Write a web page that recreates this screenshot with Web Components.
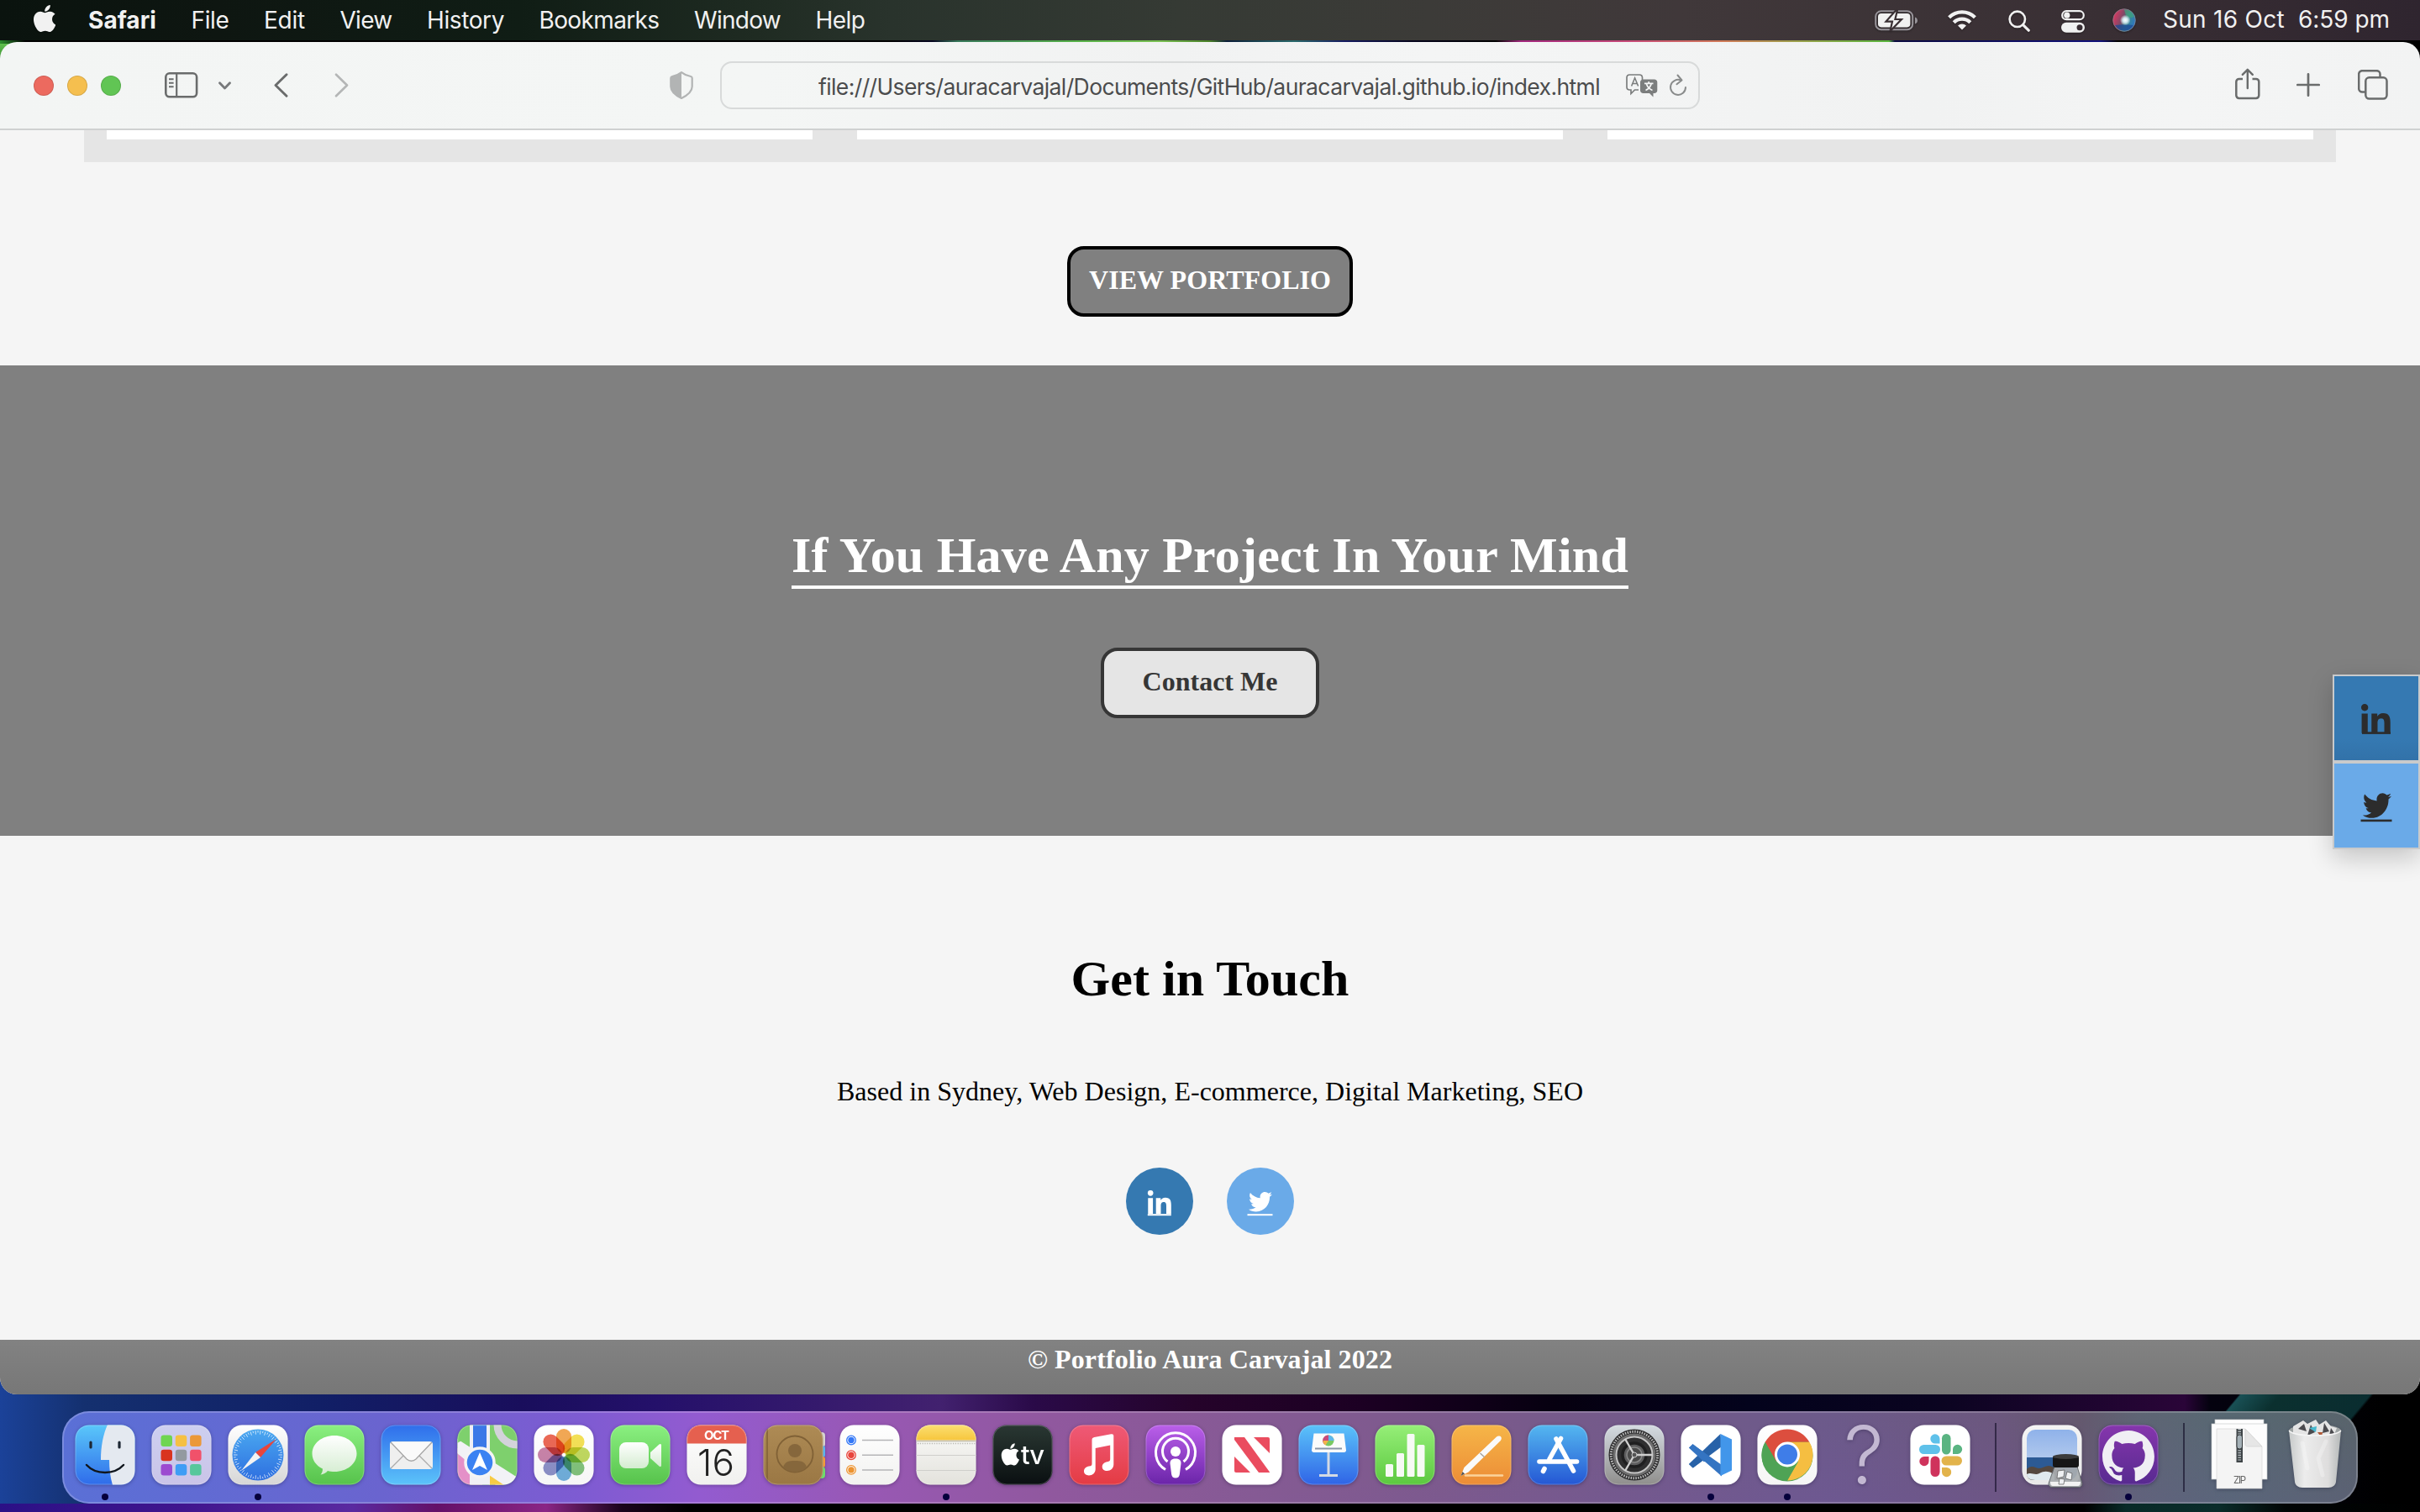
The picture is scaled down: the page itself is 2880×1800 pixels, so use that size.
<!DOCTYPE html>
<html lang="en">
<head>
<meta charset="utf-8">
<title>Portfolio</title>
<style>
html,body{margin:0;padding:0;width:2880px;height:1800px;overflow:hidden;background:#000}
</style>
</head>
<body>
<desk-top></desk-top>
<script>
const define = (name, html, init) => customElements.define(name, class extends HTMLElement {
  connectedCallback() {
    if (this.shadowRoot) return;
    const t = document.createElement('template');
    t.innerHTML = typeof html === 'function' ? html(this) : html;
    this.attachShadow({ mode: 'open' }).appendChild(t.content.cloneNode(true));
    if (init) init(this);
  }
});

/* Single line of text tracked to an exact advance width (attribute w). */
define('fit-text', `<style>:host{display:inline-block;white-space:pre}span{display:inline-block;white-space:pre}</style><span><slot></slot></span>`, el => {
  const s = el.shadowRoot.querySelector('span');
  const w = +el.getAttribute('w'), n = el.textContent.length;
  const d = (w - s.getBoundingClientRect().width) / n;
  s.style.letterSpacing = d.toFixed(3) + 'px';
  el.style.width = w + 'px';
});

const APPLE = 'M318.7 268.7c-.2-36.7 16.4-64.4 50-84.8-18.8-26.9-47.2-41.7-84.7-44.6-35.5-2.8-74.3 20.7-88.5 20.7-15 0-49.4-19.7-76.4-19.7C63.3 141.2 4 184.8 4 273.5q0 39.3 14.4 81.2c12.8 36.7 59 126.7 107.2 125.2 25.2-.6 43-17.9 75.8-17.9 31.8 0 48.3 17.9 76.4 17.9 48.6-.7 90.4-82.5 102.6-119.3-65.2-30.7-61.7-90-61.7-91.9zm-56.6-164.2c27.3-32.4 24.8-61.9 24-72.5-24.1 1.4-52 16.4-67.9 34.9-17.5 19.8-27.8 44.3-25.6 71.9 26.1 2 49.9-11.4 69.5-34.3z';
const TW = 'M459.37 151.716c.325 4.548.325 9.097.325 13.645 0 138.72-105.583 298.558-298.558 298.558-59.452 0-114.68-17.219-161.137-47.106 8.447.974 16.568 1.299 25.34 1.299 49.055 0 94.213-16.568 130.274-44.832-46.132-.975-84.792-31.188-98.112-72.772 6.498.974 12.995 1.624 19.818 1.624 9.421 0 18.843-1.3 27.614-3.573-48.081-9.747-84.143-51.98-84.143-102.985v-1.299c13.969 7.797 30.214 12.67 47.431 13.319-28.264-18.843-46.781-51.005-46.781-87.391 0-19.492 5.197-37.36 14.294-52.954 51.655 63.675 129.3 105.258 216.365 109.807-1.624-7.797-2.599-15.918-2.599-24.04 0-57.828 46.782-104.934 104.934-104.934 30.213 0 57.502 12.67 76.67 33.137 23.715-4.548 46.456-13.32 66.599-25.34-7.798 24.366-24.366 44.833-46.132 57.827 21.117-2.273 41.584-8.122 60.426-16.243-14.292 20.791-32.161 39.308-52.628 54.253z';
const LI = 'M100.28 448H7.4V148.9h92.88zM53.79 108.1C24.09 108.1 0 83.5 0 53.8a53.79 53.79 0 0 1 107.58 0c0 29.7-24.1 54.3-53.79 54.3zM447.9 448h-92.68V302.4c0-34.7-.7-79.2-48.29-79.2-48.29 0-55.69 37.7-55.69 76.7V448h-92.78V148.9h89.08v40.8h1.3c12.4-23.5 42.69-48.3 87.88-48.3 94 0 111.28 61.9 111.28 142.3V448z';

/* Monochrome interface glyphs: [width, height, markup], drawn with currentColor. */
const GLYPHS = {
  apple: [26, 32, `<g transform="translate(-.3 -2.3) scale(.0702 .0715)"><path fill="currentColor" d="${APPLE}"/></g>`],
  battery: [52, 25, `<rect x="1.2" y="1.2" width="44" height="22" rx="6.5" fill="none" stroke="#98949a" stroke-width="2"/><rect x="4" y="4" width="38.4" height="16.4" rx="3.8" fill="currentColor"/><path d="M48 8.5v8c2-.6 3-2.200 3-4s-1-3.400-3-4z" fill="#98949a"/><path d="M25.500 0L13.500 13.600h7.500L18.500 25 32 11h-7.600L27 0z" fill="currentColor" stroke="#3a3034" stroke-width="2.200"/>`],
  wifi: [34, 25, `<g fill="none" stroke="currentColor" stroke-width="4.300"><path d="M1.600 9.700a22 22 0 0 1 30.800 0"/><path d="M7.200 15.700a14 14 0 0 1 19.600 0"/></g><path fill="currentColor" d="M17 24.600l-5-5.200a7.400 7.400 0 0 1 10 0z"/>`],
  search: [26, 26, `<circle cx="10.800" cy="10.800" r="9.200" fill="none" stroke="currentColor" stroke-width="2.600"/><path d="M17.600 17.600l6.600 6.600" stroke="currentColor" stroke-width="3.200" stroke-linecap="round"/>`],
  control: [28, 27, `<rect x="1.200" y="1.200" width="25.600" height="10" rx="5" fill="none" stroke="currentColor" stroke-width="2.200"/><circle cx="6.800" cy="6.200" r="3.600" fill="currentColor"/><rect y="14.800" width="28" height="12" rx="6" fill="currentColor"/><circle cx="22" cy="20.800" r="3.500" fill="#382e33"/>`],
  siri: [28, 28, `<defs><radialGradient id="a" cx=".55" cy=".5" r=".5"><stop offset="0" stop-color="#fff"/><stop offset=".22" stop-color="#cfe8f0"/><stop offset=".5" stop-color="#fff" stop-opacity="0"/></radialGradient><linearGradient id="b" x1="0" y1=".3" x2="1" y2=".7"><stop offset="0" stop-color="#e0365f"/><stop offset=".4" stop-color="#7d4a68"/><stop offset=".6" stop-color="#3a8a8c"/><stop offset="1" stop-color="#2c74c8"/></linearGradient></defs><circle cx="14" cy="14" r="13.500" fill="url(#b)"/><path d="M14 1a13 13 0 0 1 12 9c-6 2-10 2-12-9z" fill="#3fa27e" opacity=".7"/><path d="M3 20c8-1 15-1 22 0-4 8-16 10-22 0z" fill="#1e4b96" opacity=".8"/><circle cx="14" cy="14" r="12.500" fill="url(#a)"/><circle cx="14" cy="14" r="13.300" fill="none" stroke="#8a8894" stroke-width=".7"/>`],
  sidebar: [40, 31, `<rect x="1.300" y="1.300" width="36.800" height="28" rx="4.500" fill="none" stroke="currentColor" stroke-width="2.600"/><path d="M14.200 1.300v28" stroke="currentColor" stroke-width="2.200"/><path d="M5 8.300h5.600M5 12.800h5.600M5 17.300h5.600" stroke="currentColor" stroke-width="1.900"/>`],
  chev: [15, 10, `<path d="M1.500 1.700L7.500 8l6-6.300" fill="none" stroke="currentColor" stroke-width="2.800" stroke-linecap="round" stroke-linejoin="round"/>`],
  back: [17, 29, `<path d="M15 1.700L2 14.500l13 12.800" fill="none" stroke="currentColor" stroke-width="2.900" stroke-linecap="round" stroke-linejoin="round"/>`],
  fwd: [17, 29, `<path d="M2 1.700l13 12.800L2 27.300" fill="none" stroke="currentColor" stroke-width="2.600" stroke-linecap="round" stroke-linejoin="round"/>`],
  shield: [28, 33, `<path d="M14 1.200c3 2.400 7.200 4.200 11 4.800 1 .2 1.700.9 1.700 2v10c0 6.500-5.700 10.500-12.700 14C7 28.500 1.300 24.500 1.300 18V8c0-1.100.7-1.800 1.700-2 3.800-.6 8-2.400 11-4.800z" fill="none" stroke="currentColor" stroke-width="2.200"/><path d="M14 1.200v30.800C7 28.500 1.300 24.500 1.300 18V8c0-1.100.7-1.800 1.700-2 3.800-.6 8-2.400 11-4.800z" fill="currentColor"/>`],
  translate: [38, 28, `<path d="M19.500 7V4.500C19.500 2.500 18 1 16 1H4.500C2.500 1 1 2.500 1 4.500v11C1 17.500 2.500 19 4.500 19H6v4.500L10.500 19H15" fill="none" stroke="currentColor" stroke-width="1.700"/><path d="M6.600 14.500l4-9.700 4 9.700M8 11.500h5.400" fill="none" stroke="currentColor" stroke-width="1.600"/><path d="M20.500 6.500h13.300c2 0 3.500 1.500 3.500 3.500v9.500c0 2-1.500 3.500-3.500 3.500h-1.300v4.500L28 23h-7.500c-2 0-3.500-1.500-3.500-3.500V10c0-2 1.500-3.500 3.500-3.500z" fill="currentColor"/><path d="M22 11.300h10.500M27.200 9v2.300M23.500 19.500c4-2 6-4.500 6.700-8M24.500 12c1 3.500 3.500 6 7 7.500" fill="none" stroke="#f4f5f5" stroke-width="1.700"/>`],
  reload: [22, 27, `<path d="M14.500 7.600A9 9 0 1 0 20 16" fill="none" stroke="currentColor" stroke-width="2" stroke-linecap="round"/><path d="M10.500 1.500l5 6-6 4.800" fill="none" stroke="currentColor" stroke-width="2" stroke-linecap="round" stroke-linejoin="round"/>`],
  share: [30, 38, `<path d="M9 13H4.700A3.400 3.400 0 0 0 1.300 16.400v16.200A3.400 3.400 0 0 0 4.700 36h20.200a3.400 3.400 0 0 0 3.400-3.400V16.400a3.400 3.400 0 0 0-3.400-3.400H20.500" fill="none" stroke="currentColor" stroke-width="2.500"/><path d="M14.800 24V2M8.800 7.800l6-6 6 6" fill="none" stroke="currentColor" stroke-width="2.400" stroke-linecap="round" stroke-linejoin="round"/>`],
  plus: [28, 28, `<path d="M14 1.300v25.400M1.300 14h25.400" stroke="currentColor" stroke-width="2.700" stroke-linecap="round"/>`],
  tabs: [36, 36, `<path d="M9 26.500H5.200a4 4 0 0 1-4-4V5.200a4 4 0 0 1 4-4h17.300a4 4 0 0 1 4 4V9" fill="none" stroke="currentColor" stroke-width="2.500"/><rect x="9.300" y="9.300" width="25.200" height="25.200" rx="4.200" fill="none" stroke="currentColor" stroke-width="2.500"/>`],
};
define('ui-glyph', el => {
  const [w, h, m] = GLYPHS[el.getAttribute('name')];
  return `<style>:host{display:block;flex:none;width:${w}px;height:${h}px}svg{display:block}</style><svg width="${w}" height="${h}" viewBox="0 0 ${w} ${h}">${m}</svg>`;
});

define('menu-bar', `<style>
:host{display:flex;height:48px;box-sizing:border-box;padding:0 36px 0 40px;align-items:flex-start;color:#f1f1f1;font:28px/48px Inter,"Liberation Sans",sans-serif;
background:linear-gradient(90deg,#0a130e 0,#0e1611 260px,#101d15 620px,#1f2b22 900px,#29332c 1060px,#353a34 1400px,#3c3b38 1700px,#40383a 2000px,#392f34 2500px,#2f252f 2880px)}
ui-glyph{filter:drop-shadow(0 1px 1px rgba(0,0,0,.35))}
nav{display:flex;gap:41.500px;margin-left:39px;flex:1}
.b{font-weight:700}
.t{display:flex;line-height:46px}
</style>
<ui-glyph name="apple" style="margin-top:6px"></ui-glyph>
<nav><fit-text class="b" w="81">Safari</fit-text><fit-text w="45">File</fit-text><fit-text w="49">Edit</fit-text><fit-text w="62">View</fit-text><fit-text w="92">History</fit-text><fit-text w="143">Bookmarks</fit-text><fit-text w="103">Window</fit-text><fit-text w="59">Help</fit-text></nav>
<ui-glyph name="battery" style="margin-top:12px"></ui-glyph>
<ui-glyph name="wifi" style="margin:11px 0 0 35px"></ui-glyph>
<ui-glyph name="search" style="margin:12px 0 0 38px"></ui-glyph>
<ui-glyph name="control" style="margin:12px 0 0 37px"></ui-glyph>
<ui-glyph name="siri" style="margin:10px 0 0 33px"></ui-glyph>
<div class="t"><fit-text w="145" style="margin-left:32px">Sun 16 Oct</fit-text><fit-text w="109" style="margin-left:16px">6:59 pm</fit-text></div>`);

define('address-bar', `<style>
:host{display:flex;box-sizing:border-box;width:1166px;height:57px;border:2px solid #d8dada;border-radius:14px;padding:0 13px 0 113px;align-items:center;color:#4b4c4d;font:26.500px/54px Inter,"Liberation Sans",sans-serif}
fit-text{margin:2px 31px 0 2px}
ui-glyph{color:#7b7d7d}
</style><fit-text w="930"><slot></slot></fit-text><ui-glyph name="translate"></ui-glyph><ui-glyph name="reload" style="margin-left:13px;color:#898b8b"></ui-glyph>`, el => {
  const f = el.shadowRoot.querySelector('fit-text'), s = f.shadowRoot.querySelector('span');
  s.style.letterSpacing = '0';
  s.style.letterSpacing = ((930 - s.getBoundingClientRect().width) / el.textContent.length).toFixed(3) + 'px';
});

define('safari-toolbar', `<style>
:host{display:flex;height:105px;box-sizing:border-box;border-bottom:2px solid #cfd1d1;align-items:center;padding:1px 38px 0 40px;color:#6a6c6c;background:linear-gradient(90deg,#f3f5f4,#f4f6f5 900px,#f1f2f2 1400px,#f4f5f5 1700px,#f1f2f2 2300px,#f4f5f5 2600px,#f2f3f3)}
i{width:24px;height:24px;border-radius:50%;box-sizing:border-box;margin-right:16px;border:1px solid rgba(0,0,0,.12);flex:none}
hr{width:1px;height:36px;border:0;background:#dfe1e1;margin:0 11px 0 13px}
</style>
<i style="background:#ec6a5f"></i><i style="background:#f5bf4f"></i><i style="background:#61c554"></i>
<ui-glyph name="sidebar" style="margin:-2px 0 0 36px"></ui-glyph><hr><ui-glyph name="chev" style="color:#77797b"></ui-glyph>
<ui-glyph name="back" style="margin:-2px 0 0 51px"></ui-glyph><ui-glyph name="fwd" style="margin:-2px 0 0 55px;color:#b4b6b6"></ui-glyph>
<ui-glyph name="shield" style="margin:-1px 0 0 382px;color:#b2b4b4"></ui-glyph>
<address-bar style="margin:-1px 0 0 32px">file:///Users/auracarvajal/Documents/GitHub/auracarvajal.github.io/index.html</address-bar>
<ui-glyph name="share" style="margin:-4px 0 0 637px"></ui-glyph><ui-glyph name="plus" style="margin:-3px 0 0 43px"></ui-glyph><ui-glyph name="tabs" style="margin:-2px 0 0 45px"></ui-glyph>`);

define('card-strip', `<style>
:host{display:flex;gap:53px;height:38px;box-sizing:border-box;margin:0 100px;padding:0 27px 27px;background:#e5e5e5}
div{flex:1;background:#fff}
</style><div></div><div></div><div></div>`);

define('pill-button', el => `<style>
:host{display:block;box-sizing:border-box;width:${el.getAttribute('w')}px;height:84px;border:4px solid var(--edge);border-radius:20px;background:var(--fill);color:var(--ink);font:bold 32px/72px "Liberation Serif",serif;text-align:center}
</style><slot></slot>`);

define('social-mark', el => {
  const li = el.getAttribute('name') === 'linkedin', s = +el.getAttribute('size');
  const m = li
    ? `<g transform="translate(0 0) scale(.0775)"><path d="${LI}"/></g><rect x="1" y="33.300" width="34" height="2.600"/>`
    : `<g transform="translate(1.800 -1.200) scale(.0668 .0712)"><path d="${TW}"/></g><rect x="-.5" y="33.600" width="37" height="2.600"/>`;
  const round = li
    ? `<g transform="translate(.8 0) scale(.0625)"><path d="${LI}"/></g><rect x=".8" y="28.200" width="28" height="2"/>`
    : `<g transform="translate(2 -.8) scale(.0545 .0565)"><path d="${TW}"/></g><rect x=".5" y="28.200" width="30" height="2"/>`;
  return `<style>:host{display:block}svg{display:block;overflow:visible}</style><svg width="38" height="38" fill="currentColor">${s === 37 ? m : round}</svg>`;
});

define('social-rail', `<style>
:host{display:block;box-shadow:0 10px 28px rgba(0,0,0,.2)}
div{box-sizing:border-box;width:104px;height:104px;border:2px solid #c9cacb;color:#2c2c2c;padding:32.500px 0 0 31.500px}
.l{background:linear-gradient(#3579b2 75%,#3272a9)}
.t{background:#6aaae8}
</style><div class="l"><social-mark name="linkedin" size="37"></social-mark></div><div class="t"><social-mark name="twitter" size="37"></social-mark></div>`);

define('portfolio-page', `<style>
:host{display:flex;flex-direction:column;height:1505px;background:#f5f5f5;font-family:"Liberation Serif",serif}
.view{display:flex;justify-content:center;margin-top:100px;--fill:#808080;--edge:#000;--ink:#fff}
.cta{display:flex;flex-direction:column;align-items:center;box-sizing:border-box;height:560px;margin-top:58px;padding-top:192px;background:#808080;--fill:#e5e5e5;--edge:#363636;--ink:#363636}
h2{margin:0;font:bold 60px/68px "Liberation Serif",serif}
.cta h2{color:#fff;padding-bottom:2px;border-bottom:4px solid #fff;margin-bottom:70px}
.touch{display:flex;flex-direction:column;align-items:center;box-sizing:border-box;height:600px;padding-top:136px;color:#000}
p{margin:82px 0 73px;font-size:32px;line-height:36px}
.s{display:flex;gap:40px;color:#fff}
.s div{box-sizing:border-box;width:80px;height:80px;border-radius:50%;padding:27px 0 0 25px}
footer{box-sizing:border-box;height:65px;padding-top:5px;background:linear-gradient(#828282,#777);color:#fff;font:bold 32px/36px "Liberation Serif",serif;text-align:center}
</style>
<card-strip></card-strip>
<div class="view"><pill-button w="340"><fit-text w="288">VIEW PORTFOLIO</fit-text></pill-button></div>
<section class="cta"><h2><fit-text w="996">If You Have Any Project In Your Mind</fit-text></h2><pill-button w="260"><fit-text w="161">Contact Me</fit-text></pill-button></section>
<section class="touch"><h2><fit-text w="331">Get in Touch</fit-text></h2><p><fit-text w="888">Based in Sydney, Web Design, E-commerce, Digital Marketing, SEO</fit-text></p>
<div class="s"><div style="background:#3579b1"><social-mark name="linkedin" size="28"></social-mark></div><div style="background:#6aaae8;padding-left:24px"><social-mark name="twitter" size="28"></social-mark></div></div></section>
<footer><fit-text w="434">© Portfolio Aura Carvajal 2022</fit-text></footer>`);

define('safari-window', `<style>
:host{display:flex;flex-direction:column;position:relative;height:1610px;border-radius:20px;overflow:hidden}
social-rail{position:absolute;right:0;top:753px}
</style><safari-toolbar></safari-toolbar><portfolio-page></portfolio-page><social-rail></social-rail>`);

/* Dock artwork, each on a 72 x 72 tile. */
const lg = (a, b, id = 'g') => `<linearGradient id="${id}" x1="0" y1="0" x2="0" y2="1"><stop offset="0" stop-color="${a}"/><stop offset="1" stop-color="${b}"/></linearGradient>`;
const tile = (a, b, m, extra = '') => `<defs>${lg(a, b)}${extra}<clipPath id="c"><rect x=".5" y=".5" width="71" height="71" rx="16.500"/></clipPath></defs><g clip-path="url(#c)"><rect width="72" height="72" fill="url(#g)"/>${m}</g><rect x="1" y="1" width="70" height="70" rx="16" fill="none" stroke="#fff" stroke-opacity=".22"/>`;
const polar = (r, deg) => [36 + r * Math.cos(deg * Math.PI / 180), 36 + r * Math.sin(deg * Math.PI / 180)].map(v => v.toFixed(2)).join(' ');
const WHITE = lg('#ffffff', '#d4ecd0', 'w');
const petals = ['#f09a37', '#f2dc3b', '#b7d445', '#6fba68', '#5aa3d8', '#7a7fc0', '#c0709c', '#e8503a'];
const ART = {
  finder: tile('#5ac8fa', '#2f6bea', `<path d="M39 0H72V72H45C42 62 41 52 41 42H31C31 25 34 11 39 0z" fill="#e4e9f0"/><path d="M19 21v6M53 21v6" stroke="#1d2733" stroke-width="3.200" stroke-linecap="round"/><path d="M14 48c11 12 33 12 44 0" fill="none" stroke="#10161d" stroke-width="2.500" stroke-linecap="round"/>`),
  launchpad: tile('#cdcff0', '#cac4e8', ['#6fd552', '#f5c044', '#eb9838', '#d9341f', '#939aa0', '#f1516a', '#9c4bd0', '#3f9df5', '#56c79c'].map((c, i) => `<rect x="${11.500 + i % 3 * 17.300}" y="${12.500 + (i / 3 | 0) * 17.300}" width="13.500" height="13.500" rx="3.300" fill="${c}"/>`).join('')),
  safari: tile('#ffffff', '#d6d6d6', `<circle cx="36" cy="36" r="30.500" fill="url(#s)"/>` + Array.from({ length: 60 }, (_, i) => `<path d="M${polar(29, i * 6)}L${polar(i % 2 ? 26.500 : 24.500, i * 6)}" stroke="#fff" stroke-opacity=".8" stroke-width=".9"/>`).join('') + `<path d="M58 17L39 39l-6-6z" fill="#e8453c"/><path d="M16 55l17-22 6 6z" fill="#f3f3f3"/>`, lg('#4aa8f0', '#2e6fe0', 's')),
  messages: tile('#8bf081', '#56c24b', `<path d="M36 13c15 0 26.500 9.500 26.500 21.500S51 56 36 56c-3 0-5.500-.3-8-1-2 2.500-5 4.200-8.500 4.600 1.800-2 2.600-4.400 2.400-7.100C14 48.700 9.500 42 9.500 34.500 9.500 22.500 21 13 36 13z" fill="url(#w)"/>`, WHITE),
  mail: tile('#2f6deb', '#5cc4fa', `<rect x="11" y="20" width="51" height="33" rx="3.500" fill="#efefef"/><path d="M12 52l18-18M61 52L43 34" stroke="#aaa" stroke-width="1.200"/><path d="M12 21l19 20c3 3 8 3 11 0l19-20" fill="#fafafa" stroke="#a6a6a6" stroke-width="1.300"/>`),
  maps: tile('#7ed06d', '#7ed06d', `<path d="M0 28l30 12V72H0z" fill="#e490c8"/><path d="M0 17l72 46v9H46L0 34z" fill="#f2f2f6"/><path d="M38 72V60l18 12z" fill="#f7cb45"/><path d="M0 0h14v14L0 22z" fill="#7ed06d"/><rect x="15" y="-2" width="24" height="76" fill="#f0f0f5"/><rect x="19" y="-2" width="16" height="46" fill="#3b78e7"/><circle cx="72" cy="0" r="24" fill="none" stroke="#d3d3da" stroke-width="9"/><circle cx="27" cy="45" r="17" fill="#3b82f2" stroke="#f4f4f4" stroke-width="3.500"/><path d="M27 33l9 21-9-5-9 5z" fill="#fff"/>`),
  photos: tile('#ffffff', '#f6f6f6', petals.map((c, i) => `<rect x="27" y="5" width="18" height="29" rx="9" fill="${c}" opacity=".86" style="mix-blend-mode:multiply" transform="rotate(${i * 45} 36 36)"/>`).join('')),
  facetime: tile('#8bf081', '#56c24b', `<rect x="11" y="21" width="35" height="31" rx="8" fill="url(#w)"/><path d="M48 33l10.500-9.500c1.200-1 2.500-.5 2.500 1v24c0 1.500-1.300 2-2.500 1L48 40z" fill="url(#w)"/>`, WHITE),
  calendar: tile('#fff', '#f0f0ee', `<rect width="72" height="22.500" fill="#e5604f"/><text x="36" y="17.500" font-size="15" font-weight="700" fill="#fff" text-anchor="middle" textLength="30">OCT</text><text x="35" y="60.500" font-size="44" font-weight="300" fill="#222" text-anchor="middle" textLength="44">16</text>`),
  contacts: `<g><rect x="60" y="9" width="14" height="18" rx="4" fill="#d5d3cf"/><rect x="60" y="25" width="14" height="14" rx="3" fill="#5ab4ef"/><rect x="60" y="38" width="14" height="13" rx="3" fill="#f39a3a"/><rect x="60" y="50" width="14" height="14" rx="4" fill="#6fdc6c"/></g>` + tile('#ae8b55', '#9a7744', `<path d="M5 0v72" stroke="#7f6136" stroke-width="1.500"/><circle cx="38" cy="35" r="21.500" fill="none" stroke="#806136" stroke-width="1.800"/><circle cx="38" cy="31" r="8" fill="#86673c"/><path d="M24 51c2-8 8-8 14-8s12 0 14 8c-7 6.500-21 6.500-28 0z" fill="#86673c"/>`),
  reminders: tile('#fff', '#f2f2f0', ['#3478f6', '#e8453c', '#ec9330'].map((c, i) => `<circle cx="14" cy="${18.500 + i * 17.700}" r="5.300" fill="#fff" stroke="${c}" stroke-width="1.300"/><circle cx="14" cy="${18.500 + i * 17.700}" r="3.700" fill="${c}"/><path d="M27 ${18.500 + i * 17.700}h37" stroke="#b5b5b7" stroke-width="1.500"/>`).join('')),
  notes: tile('#fbfbfa', '#e3e2dc', `<rect width="72" height="18.500" fill="url(#y)"/><path d="M0 19.500h72" stroke="#c3bdaa" stroke-width="1.600"/><path d="M2 22.500h70" stroke="#b7b7b0" stroke-width="1.300" stroke-dasharray="1.200 1.600"/><path d="M0 36.500h72M0 54.500h72" stroke="#cfcfcb" stroke-width="1.200"/>`, lg('#fbdf72', '#f7c63d', 'y')),
  tv: tile('#2a3833', '#0a0f11', `<g transform="translate(10.500 20.500) scale(.0565 .0585)"><path fill="#fff" d="${APPLE}"/></g><text x="34" y="47" font-size="31" font-weight="500" fill="#fff" textLength="28">tv</text>`),
  music: tile('#ef5a77', '#e43b43', `<path d="M27.500 18.500c0-2 1-3 2.800-3.400l20-3.800c1.900-.4 3 .4 3 2.300v34c0 4.500-3.500 7.500-7.800 7.500-3.600 0-5.800-2-5.800-4.900 0-3.400 2.600-5.300 6-6 2.700-.5 3.500-1 3.500-3.200V24.500l-17.500 3.400v25.200c0 4.500-3.500 7.400-7.800 7.400-3.600 0-5.900-2-5.900-4.900 0-3.400 2.600-5.300 6-6 2.700-.5 3.500-1 3.500-3.200z" fill="#fff"/>`),
  podcasts: tile('#bb60ea', '#6a24a8', `<g fill="none" stroke="#fff" stroke-width="3"><path d="M24 53.500a23.500 23.500 0 1 1 24 0"/><path d="M26.500 44a15.500 15.500 0 1 1 19 0"/></g><circle cx="36" cy="32" r="6" fill="#fff"/><path d="M29.500 46c0-4 2.500-5.500 6.500-5.500s6.500 1.500 6.500 5.500l-1.600 13c-.5 3-2 4.500-4.900 4.500s-4.400-1.500-4.900-4.500z" fill="#fff"/>`),
  news: tile('#ffffff', '#ffffff', `<g fill="#ea4c5f"><path d="M15 15h12l30 41.500v.5H44L15 18z"/><path d="M38 15h17a2 2 0 0 1 2 2v17z"/><path d="M15 38v17a2 2 0 0 0 2 2h17z"/></g>`),
  keynote: tile('#5bc4fa', '#2f63e6', `<path d="M34.500 32h3v29h-3z" fill="#d4dae4"/><path d="M25 59h22v3H25z" fill="#d4dae4"/><path d="M18.500 10.500h36l2.500 20c0 1.500-1 2.500-2.500 2.500h-36C17 33 16 32 16 30.500z" fill="#fbfbfb"/><path d="M20 28.500h32" stroke="#8a96a8" stroke-width="2"/><circle cx="36" cy="19" r="6.500" fill="#79c963"/><path d="M36 19v-6.500a6.500 6.500 0 0 1 6.500 6.500z" fill="#5eb7ea"/><path d="M36 19l-5 4.500a6.500 6.500 0 0 1 5-11z" fill="#c94a7b"/><path d="M36 19h-6.500a6.500 6.500 0 0 0 3 5.500z" fill="#f2b34a"/>`),
  numbers: tile('#96ef78', '#5bc83f', `<g fill="#f6faf4"><rect x="13" y="47" width="9" height="15" rx="1.500"/><rect x="26" y="34" width="9" height="28" rx="1.500"/><rect x="38.500" y="11" width="9" height="51" rx="1.500"/><rect x="50.500" y="24" width="9" height="38" rx="1.500"/></g>`),
  pages: tile('#f6b648', '#ec8c36', `<path d="M17 60.500h44" stroke="#fbd39c" stroke-width="2.400" stroke-linecap="round"/><path d="M11.500 61l4-10L54 14.500c1.700-1.500 4.500-1 5.200 0 1 1.200.8 3-.3 4.500L20.500 56.500z" fill="#fafafa"/><path d="M34.500 34l5 4.500" stroke="#a5a29c" stroke-width="1.500"/><path d="M11.500 61l2-5 2.700 2.500z" fill="#555"/>`),
  appstore: tile('#55b8f0', '#2456d4', `<g stroke="#fff" stroke-width="5.600" stroke-linecap="round" fill="none"><path d="M39.500 16.500L26 41"/><path d="M34 17l20.500 38"/><path d="M14 44h44.500"/><path d="M20 52.500l-1.500 3"/></g>`),
  settings: tile('#d5dce2', '#8f8e8c', `<circle cx="36" cy="36" r="30.500" fill="#2b2b2c"/><circle cx="36" cy="36" r="27.700" fill="none" stroke="#b9b9b9" stroke-width="3" stroke-dasharray="1.500 1.400"/><circle cx="36" cy="36" r="25.500" fill="#6e6e6e"/><circle cx="36" cy="36" r="21.500" fill="#2f2f30" stroke="#c4c4c4" stroke-width="2"/><circle cx="36" cy="36" r="14" fill="#5e5e5f" stroke="#1f1f20" stroke-width="3.500"/><circle cx="36" cy="36" r="9" fill="#4a4a4a" stroke="#888" stroke-width="1.500"/><path d="M36 36h22M36 36L25 17M36 36L25 55" stroke="#cfcfcf" stroke-width="2.400"/><circle cx="36" cy="36" r="3" fill="#555" stroke="#ccc"/>`),
  vscode: tile('#ffffff', '#ffffff', `<path d="M47.500 11L10 47l4.500 4.500L21 47l28-21z" fill="#2862a8"/><path d="M10 27.500l4.500-4L49 48v13.500z" fill="#3474c2"/><path d="M10 47l12.500-12 6 5L15 51.500z" fill="#2862a8"/><path d="M10 27.500l4.500-4.500L34 38l-6 6.500z" fill="#3474c2"/><path d="M47.500 11L61 17.500V54.500L47.500 61z" fill="#4296ea"/>`),
  chrome: tile('#ffffff', '#f5f5f5', `<circle cx="36" cy="37" r="30.500" fill="#4fa355"/><path d="M36 36L9.600 20.700A30.500 30.500 0 0 1 62.400 20.700H36z" fill="#dc4e3e"/><path d="M36 20.700H62.400A30.500 30.500 0 0 1 36 66.500L49 43.500z" fill="#f5be41"/><path d="M9.600 20.700L23 44 36 30z" fill="#dc4e3e"/><path d="M9.600 20.700A30.500 30.500 0 0 0 36 66.500L49 44 23 44z" fill="#4fa355"/><circle cx="36" cy="35.500" r="15" fill="#fff"/><circle cx="36" cy="35.500" r="12" fill="#3f7de8"/>`),
  missing: `<text x="36" y="70" font-size="95" font-weight="300" fill="#c3b8d2" text-anchor="middle">?</text>`,
  slack: tile('#ffffff', '#ffffff', `<g fill="#5fc1ea"><rect x="11" y="24" width="25" height="11" rx="5.500"/><path d="M35.500 22.500H30a5.600 5.600 0 1 1 5.500-5.600z"/></g><g fill="#5ab482"><rect x="38" y="11" width="10.500" height="24.500" rx="5.200"/><path d="M51 35V29.500a5.600 5.600 0 1 1 5.600 5.500z"/></g><g fill="#e2b34b"><rect x="37.500" y="37.500" width="24.500" height="11" rx="5.500"/><path d="M38 51h5.500A5.600 5.600 0 1 1 38 56.600z"/></g><g fill="#cf335c"><rect x="24.500" y="37.500" width="11" height="24.500" rx="5.500"/><path d="M22.500 38v5.500A5.600 5.600 0 1 1 16.900 38z"/></g>`),
  preview: tile('#f4f4f4', '#e8e8e8', `<svg x="6" y="6" width="60" height="60"><defs>${lg('#8fb2ea', '#c9d9ef', 'k')}</defs><rect width="60" height="60" rx="10" fill="url(#k)"/><path d="M0 33h60v17a10 10 0 0 1-10 10H10A10 10 0 0 1 0 50z" fill="#2c5a94"/><path d="M0 47c6-6 10-1 15-1s9-5 15-2l14 6v10H8C3 60 0 57 0 52z" fill="#55483f"/><path d="M0 53c6-3 9 2 15-1s10-3 18 1v7H10C4 60 0 57 0 54z" fill="#dfe9ee"/></svg>`) + `<path d="M39 50h27l6 20c0 3-2 4.500-4 4.500H36c-2 0-4-1.500-4-4.500z" fill="#a9adb0" opacity=".93" stroke="#5f6468" stroke-width="1"/><path d="M34 68h36c0 3-1 5-3 5H37c-2 0-3-2-3-5z" fill="#f2f2f2"/><path d="M43 55l8-1-1 8-8 2zM54 56l6 2-1 8-7-2zM45 64l6 1-1 6h-6z" fill="#eef0f2" stroke="#555" stroke-width=".7"/><rect x="37" y="37" width="31" height="14" rx="3" fill="#161616"/><ellipse cx="52.500" cy="38" rx="15.500" ry="3" fill="#3c3c3c"/>`,
  github: tile('#8636ad', '#572a90', `<g transform="translate(5 7) scale(3.870)"><path fill="#f0eef4" d="M8 0C3.580 0 0 3.580 0 8c0 3.540 2.290 6.530 5.470 7.590.4.070.55-.17.55-.38 0-.19-.01-.82-.01-1.490-2.010.37-2.530-.49-2.690-.94-.09-.23-.48-.94-.82-1.130-.28-.15-.68-.52-.01-.53.63-.01 1.080.58 1.230.82.72 1.210 1.870.87 2.330.66.07-.52.28-.87.51-1.070-1.780-.2-3.640-.89-3.640-3.950 0-.87.31-1.590.82-2.150-.08-.2-.36-1.020.08-2.120 0 0 .67-.21 2.200.82.64-.18 1.320-.27 2-.27s1.360.09 2 .27c1.530-1.040 2.200-.82 2.200-.82.44 1.100.16 1.920.08 2.120.51.56.82 1.270.82 2.150 0 3.070-1.870 3.750-3.650 3.950.29.25.54.73.54 1.480 0 1.070-.01 1.930-.01 2.200 0 .21.15.46.55.38A8.010 8.010 0 0 0 16 8c0-4.420-3.580-8-8-8z"/></g>`),
  zip: `<rect x="7" y="-6" width="58" height="70" fill="#fff" stroke="#c9cdcd" stroke-width=".7"/><rect x="3" y="-1" width="66" height="66" fill="#fdfdfd" stroke="#c9cdcd" stroke-width=".7"/><path d="M9 5h34l20 21v50H9z" fill="#f4f4f4" stroke="#d5d5d5" stroke-width=".7"/><path d="M43 5v18c0 2 1 3 3 3h17z" fill="#e6e6e6" stroke="#cfcfcf" stroke-width=".6"/><rect x="32.500" y="5" width="7.500" height="40" fill="#3f4548"/><path d="M36.200 5v38" stroke="#bcc3c6" stroke-width="3.600" stroke-dasharray="1.200 1.600"/><rect x="33" y="12" width="6.500" height="17" rx="3" fill="#a4b0b6" stroke="#33373a"/><text x="36.500" y="70" font-size="11.500" fill="#666" text-anchor="middle" textLength="15">ZIP</text>`,
  trash: `<defs><linearGradient id="t"><stop offset="0" stop-color="#c6c9c9"/><stop offset=".3" stop-color="#ececec"/><stop offset=".75" stop-color="#dedddd"/><stop offset="1" stop-color="#b4b8b8"/></linearGradient></defs><ellipse cx="35" cy="7" rx="31" ry="7.500" fill="#9fa5a5"/><path d="M9 2l12-7 5 4 10-5 4 6 8-5 6 7 7 2-4 10-22 3-26-5z" fill="#e4e4e4"/><path d="M15 5l7-6 3 9zM30 0l5 9-9 4zM46-2l6 10-8 2zM54 4l4 6-6 3z" fill="#4b4b4f"/><path d="M28 4l9-2-1 7z" fill="#48b8ce"/><path d="M38 9l6 0-1 7z" fill="#b05a38"/><path d="M4 7c6 8 56 8 62 0L60 68c-.4 4-4 7-9 7H20c-5 0-8.600-3-9-7z" fill="url(#t)"/><path d="M4 7c6 8 56 8 62 0" fill="none" stroke="#f4f4f4" stroke-width="1.300"/><path d="M20 22l6 30M48 20l-9 20 5 20" stroke="#fff" stroke-opacity=".28" stroke-width="5" fill="none" stroke-linecap="round"/>`,
};
define('dock-icon', el => `<style>
:host{display:flex;flex-direction:column;align-items:center;box-sizing:border-box;width:91px;height:106px;padding-top:14px;flex:none}
svg.a{display:block;width:72px;height:72px;overflow:visible;filter:drop-shadow(0 1px 2px rgba(0,0,30,.28));font-family:Inter,"Liberation Sans",sans-serif;isolation:isolate}
i{width:8px;height:8px;border-radius:50%;margin-top:10px;background:#06003c}
</style><svg class="a" viewBox="0 0 72 72">${ART[el.getAttribute('name')]}</svg>${el.hasAttribute('on') ? '<i></i>' : ''}`);

define('app-dock', () => {
  const on = ['finder', 'safari', 'notes', 'vscode', 'chrome', 'github'];
  const ic = s => s.split(' ').map(n => `<dock-icon name="${n}"${on.includes(n) ? ' on' : ''}></dock-icon>`).join('');
  return `<style>
:host{display:flex;box-sizing:border-box;width:2732px;height:110px;margin:20px 0 0 74px;padding-left:3.500px;border:2px solid rgba(255,255,255,.2);border-radius:32px;
background:linear-gradient(172deg,rgba(80,90,90,0) 60%,rgba(130,60,240,.12)) border-box,linear-gradient(90deg,#5a70d6 0,#6a64cf 380px,#7e5bd2 620px,#935bd0 760px,#9858b4 960px,#90589e 1180px,#855a94 1420px,#7c5a8c 1640px,#735a8a 1860px,#6c5a8a 2100px,#6b587c 2300px,#63596a 2400px,#5d6670 2470px,#556a6c 2580px,#566663 2732px) border-box}
hr{width:2px;height:82px;border:0;margin:12px 20px 0 19.500px;background:rgba(15,10,35,.6);flex:none}
</style>${ic('finder launchpad safari messages mail maps photos facetime calendar contacts reminders notes tv music podcasts news keynote numbers pages appstore settings vscode chrome missing slack')}<hr>${ic('preview github')}<hr>${ic('zip trash')}`;
});

define('desk-top', `<style>
:host{display:flex;flex-direction:column;width:2880px;height:1800px;
background:
linear-gradient(90deg,#2b8e2c 0,#000 30px,#000 1060px,#050520 1110px,#37795a 1140px,#55b148 1280px,#79c052 1380px,#487f26 1440px,#0a1d38 1460px,#2a6a6c 1540px,#141a60 1600px,#05041c 1680px,#000 1780px,#a3267d 1810px,#c84a78 1940px,#d07a58 2050px,#9aa04a 2140px,#58b53c 2248px,#0a0a40 2255px,#10107a 2500px,#000 2520px) 0 0/2880px 52px no-repeat,
linear-gradient(#5fc04c,#3c8a34) 0 52px/20px 20px no-repeat,
linear-gradient(90deg,#2b1086 0,#40158e 220px,#5a2aa0 420px,#641068 520px,#8a2585 650px,#1a041c 740px,#000 820px,#000 2480px,#082a28 2530px,#0a2c2a 2640px,#010505 2720px,#000) 0 1790px/2880px 10px no-repeat,
linear-gradient(130deg,transparent 22px,#195055 24px,#0b302f 60px,#0a2d30 142px,transparent 145px) 2640px 1655px/200px 40px no-repeat,
linear-gradient(90deg,#1b4299 0,#14306f 100px,#111f66 380px,#190e5c 620px,#24106a 780px,#42216f 1120px,#2a0a48 1230px,#25032a 1420px,#1c0023 1620px,#060010 1850px,#03031c 2080px,#0a0420 2300px,#2a0538 2600px,#04020f 2630px,#020208 2760px,#000 2840px) 0 1640px/2880px 160px no-repeat #000}
safari-window{margin-top:2px}
</style><menu-bar></menu-bar><safari-window></safari-window><app-dock></app-dock>`);
</script>
</body>
</html>
